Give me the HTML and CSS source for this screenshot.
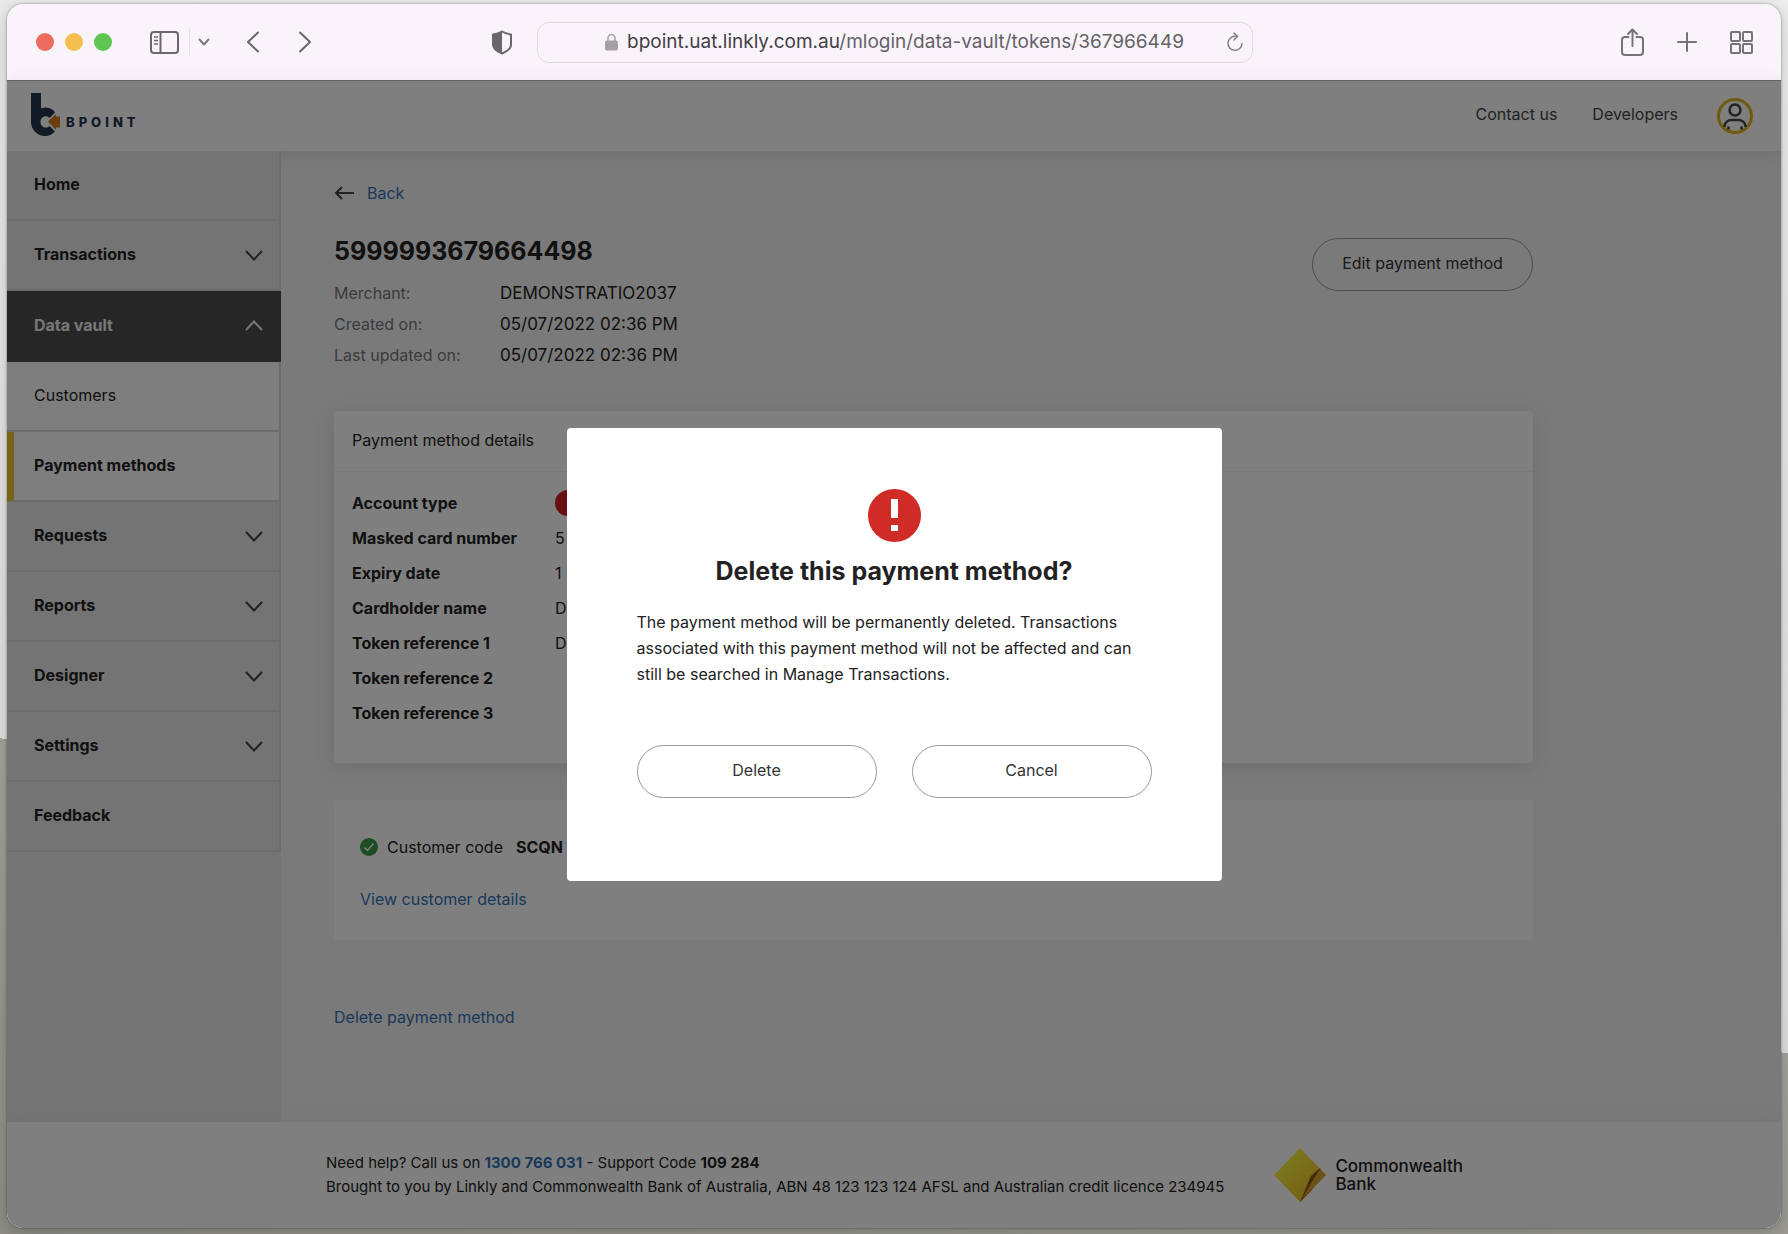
FILE: index.html
```html
<!DOCTYPE html>
<html lang="en">
<head>
    <meta charset="UTF-8">
    <meta name="viewport" content="width=device-width, initial-scale=1.0">
    <title>BPOINT - Payment method</title>
    <link rel="stylesheet" href="styles.css">
</head>
<body>
    <div class="window">

        <!-- Browser toolbar -->
        <div class="toolbar">
            <div class="toolbar-side">
                <span class="dot dot-red"></span>
                <span class="dot dot-yellow"></span>
                <span class="dot dot-green"></span>
                <button type="button" class="tool sidebar-toggle" aria-label="Sidebar">
                    <svg width="29" height="23" viewBox="0 0 29 23" fill="none" stroke="#6b666d" stroke-width="2"><rect x="1" y="1" width="27" height="21" rx="3"/><path d="M10.500 1v21"/><path d="M4 6h4M4 9.500h4M4 13h4" stroke-width="1.500"/></svg>
                </button>
                <span class="tool-divider"></span>
                <button type="button" class="tool" aria-label="Tab groups">
                    <svg width="12" height="8" viewBox="0 0 12 8" fill="none" stroke="#7d7880" stroke-width="2" stroke-linecap="round" stroke-linejoin="round"><path d="M1.500 1.500L6 6.500l4.500-5"/></svg>
                </button>
                <button type="button" class="tool nav-back" aria-label="Go back">
                    <svg width="14" height="22" viewBox="0 0 14 22" fill="none" stroke="#6b666d" stroke-width="2" stroke-linecap="round" stroke-linejoin="round"><path d="M12 1.500L2 11l10 9.500"/></svg>
                </button>
                <button type="button" class="tool nav-forward" aria-label="Go forward">
                    <svg width="14" height="22" viewBox="0 0 14 22" fill="none" stroke="#6b666d" stroke-width="2" stroke-linecap="round" stroke-linejoin="round"><path d="M2 1.500L12 11 2 20.500"/></svg>
                </button>
                <button type="button" class="tool shield" aria-label="Privacy report">
                    <svg width="22" height="25" viewBox="0 0 22 25"><path d="M11 1.500c3 1.800 5.500 2.500 9 3v10c0 4-4 7-9 9-5-2-9-5-9-9v-10c3.500-.5 6-1.200 9-3z" fill="none" stroke="#6b666d" stroke-width="2"/><path d="M11 1.500v22c-5-2-9-5-9-9v-10c3.500-.5 6-1.200 9-3z" fill="#6b666d"/></svg>
                </button>
            </div>
            <div class="address">
                <svg width="13" height="18" viewBox="0 0 13 18"><path d="M3 8V5a3.500 3.500 0 0 1 7 0v3" fill="none" stroke="#a4a0a6" stroke-width="1.500"/><rect y="7.500" width="13" height="10" rx="2" fill="#a4a0a6"/></svg>
                <span class="address-url">bpoint.uat.linkly.com.au<span class="address-path">/mlogin/data-vault/tokens/367966449</span></span>
                <button type="button" class="tool reload" aria-label="Reload">
                    <svg width="16" height="20" viewBox="0 0 16 20" fill="none" stroke="#858088" stroke-width="1.500" stroke-linecap="round" stroke-linejoin="round"><path d="M9.500 4.500a7 7 0 1 0 5.500 7"/><path d="M7 1l3.500 3.500L7 8"/></svg>
                </button>
            </div>
            <div class="toolbar-side toolbar-right">
                <button type="button" class="tool" aria-label="Share">
                    <svg width="23" height="28" viewBox="0 0 23 28" fill="none" stroke="#777279" stroke-width="2" stroke-linecap="round" stroke-linejoin="round"><path d="M7.500 9H4a3 3 0 0 0-3 3v12a3 3 0 0 0 3 3h15a3 3 0 0 0 3-3V12a3 3 0 0 0-3-3h-3.500"/><path d="M11.500 18V1.500M7 6l4.500-4.500L16 6"/></svg>
                </button>
                <button type="button" class="tool" aria-label="New tab">
                    <svg width="20" height="20" viewBox="0 0 20 20" stroke="#777279" stroke-width="2" stroke-linecap="round"><path d="M10 1v18M1 10h18"/></svg>
                </button>
                <button type="button" class="tool" aria-label="Tab overview">
                    <svg width="23" height="23" viewBox="0 0 23 23" fill="none" stroke="#777279" stroke-width="2"><rect x="1" y="1" width="9" height="9" rx="1"/><rect x="13" y="1" width="9" height="9" rx="1"/><rect x="1" y="13" width="9" height="9" rx="1"/><rect x="13" y="13" width="9" height="9" rx="1"/></svg>
                </button>
            </div>
        </div>

        <div class="page">
            <!-- Site header -->
            <header class="header">
                <a href="#" class="logo" aria-label="BPOINT">
                    <svg width="30" height="43" viewBox="0 0 30 43"><path d="M0 0h10v15.500c7-2.500 11.500.5 14 4L18.500 25c-3.500-3.500-9-1-9 4s5.500 7.500 9 4l5.500 5.500C20 43 15.500 43 13 43 5 42 0 36 0 29z" fill="#24344d"/><path d="M17 28.500l8-7.500v2.500h4v11h-4V37z" fill="#d97b1f"/></svg>
                    <span class="logo-text">BPOINT</span>
                </a>
                <nav class="header-links">
                    <a href="#">Contact us</a>
                    <a href="#">Developers</a>
                    <button type="button" class="avatar" aria-label="Account">
                        <svg width="36" height="36" viewBox="0 0 36 36" fill="none"><circle cx="18" cy="18" r="16.500" stroke="#e0b51c" stroke-width="3"/><g stroke="#444" stroke-width="2.500"><circle cx="18" cy="12" r="5.500"/><path d="M7.500 29v-1a7 7 0 0 1 7-6h7a7 7 0 0 1 7 6v1"/><path d="M11.500 28.500v3M24.500 28.500v3"/></g></svg>
                    </button>
                </nav>
            </header>

            <div class="columns">
                <!-- Side navigation -->
                <nav class="sidebar">
                    <a href="#" class="nav-item">Home</a>
                    <a href="#" class="nav-item">Transactions <svg class="chevron" viewBox="0 0 18 11"><path d="M1 1l8 8.500L17 1"/></svg></a>
                    <a href="#" class="nav-item nav-open">Data vault <svg class="chevron" viewBox="0 0 18 11"><path d="M1 10l8-8.500L17 10"/></svg></a>
                    <a href="#" class="nav-item nav-sub">Customers</a>
                    <a href="#" class="nav-item nav-sub nav-current">Payment methods</a>
                    <a href="#" class="nav-item">Requests <svg class="chevron" viewBox="0 0 18 11"><path d="M1 1l8 8.500L17 1"/></svg></a>
                    <a href="#" class="nav-item">Reports <svg class="chevron" viewBox="0 0 18 11"><path d="M1 1l8 8.500L17 1"/></svg></a>
                    <a href="#" class="nav-item">Designer <svg class="chevron" viewBox="0 0 18 11"><path d="M1 1l8 8.500L17 1"/></svg></a>
                    <a href="#" class="nav-item">Settings <svg class="chevron" viewBox="0 0 18 11"><path d="M1 1l8 8.500L17 1"/></svg></a>
                    <a href="#" class="nav-item">Feedback</a>
                </nav>

                <main class="main">
                    <div class="content">
                        <a href="#" class="back">
                            <svg width="20" height="14" viewBox="0 0 20 14" fill="none" stroke="#444" stroke-width="2"><path d="M20 7H2M8 1L2 7l6 6"/></svg>
                            Back
                        </a>

                        <div class="title-row">
                            <div>
                                <h1>5999993679664498</h1>
                                <dl class="summary">
                                    <dt>Merchant:</dt><dd>DEMONSTRATIO2037</dd>
                                    <dt>Created on:</dt><dd>05/07/2022 02:36 PM</dd>
                                    <dt>Last updated on:</dt><dd>05/07/2022 02:36 PM</dd>
                                </dl>
                            </div>
                            <button type="button" class="btn btn-edit">Edit payment method</button>
                        </div>

                        <!-- Payment method details -->
                        <section class="card">
                            <h2>Payment method details</h2>
                            <table class="details">
                                <tr><th scope="row">Account type</th><td><svg class="card-brand" width="40" height="26" viewBox="0 0 40 26"><circle cx="13" cy="13" r="13" fill="#d21f24"/><circle cx="27" cy="13" r="13" fill="#f0991c"/></svg></td></tr>
                                <tr><th scope="row">Masked card number</th><td>5</td></tr>
                                <tr><th scope="row">Expiry date</th><td>1</td></tr>
                                <tr><th scope="row">Cardholder name</th><td>D</td></tr>
                                <tr><th scope="row">Token reference 1</th><td>D</td></tr>
                                <tr><th scope="row">Token reference 2</th><td></td></tr>
                                <tr><th scope="row">Token reference 3</th><td></td></tr>
                            </table>
                        </section>

                        <!-- Customer -->
                        <section class="customer">
                            <p class="customer-code">
                                <svg width="18" height="18" viewBox="0 0 18 18"><circle cx="9" cy="9" r="9" fill="#3a9a40"/><path d="M4.500 9.500l3 3 6-7" fill="none" stroke="#fff" stroke-width="1.500"/></svg>
                                <span>Customer code</span>
                                <strong>SCQN</strong>
                            </p>
                            <a href="#">View customer details</a>
                        </section>

                        <a href="#" class="delete-link">Delete payment method</a>
                    </div>
                </main>
            </div>

            <footer class="footer">
                <p>
                    Need help? Call us on <a href="#">1300 766 031</a> - Support Code <strong>109 284</strong><br>
                    Brought to you by Linkly and Commonwealth Bank of Australia, ABN 48 123 123 124 AFSL and Australian credit licence 234945
                </p>
                <div class="bank">
                    <svg width="52" height="54" viewBox="0 0 52 54">
                        <defs>
                            <linearGradient id="gold" x1="0" y1="0" x2="1" y2="1"><stop offset="0" stop-color="#ffff30"/><stop offset="0.300" stop-color="#f5e93a"/><stop offset="1" stop-color="#e8b020"/></linearGradient>
                            <linearGradient id="fold" x1="0" y1="0" x2="1" y2="1"><stop offset="0" stop-color="#6a3c08"/><stop offset="0.500" stop-color="#8f5410"/><stop offset="1" stop-color="#eebd30"/></linearGradient>
                        </defs>
                        <path d="M26 0l26 27-26 27L0 27z" fill="url(#gold)"/>
                        <path d="M46 20l-9 8-11 26 12-12 9-17z" fill="url(#fold)"/>
                        <path d="M46 21l6 6-24 24 11-19z" fill="#dca32c"/>
                    </svg>
                    <span>Commonwealth<br>Bank</span>
                </div>
            </footer>

            <!-- Delete confirmation -->
            <div class="overlay">
                <div class="modal" role="dialog" aria-modal="true" aria-labelledby="modal-title">
                    <svg class="modal-icon" width="53" height="53" viewBox="0 0 53 53"><circle cx="26.500" cy="26.500" r="26.500" fill="#cf2b27"/><path d="M23 10h7v19h-7zM23 36h7v6h-7z" fill="#fff"/></svg>
                    <h2 id="modal-title">Delete this payment method?</h2>
                    <p>The payment method will be permanently deleted. Transactions associated with this payment method will not be affected and can still be searched in Manage Transactions.</p>
                    <div class="modal-buttons">
                        <button type="button" class="btn">Delete</button>
                        <button type="button" class="btn">Cancel</button>
                    </div>
                </div>
            </div>
        </div>
    </div>
</body>
</html>
```
FILE: styles.css
```css
* {
    box-sizing: border-box;
}

body {
    margin: 0;
    padding: 4px 7px 6px;
    min-height: 100vh;
    display: flex;
    background: linear-gradient(190deg, #eeeeee 0, #e0e0e0 68%, #a3a39b 68%, #8c8c85 100%);
    color: #222;
    font-family: Inter, "Liberation Sans", sans-serif;
    font-size: 16px;
    line-height: 26px;
}

h1, h2, p, dl, dd {
    margin: 0;
}

a {
    color: #3273b4;
    text-decoration: none;
}

button {
    font: inherit;
    color: inherit;
    cursor: pointer;
}

svg {
    display: block;
    flex: none;
}

.window {
    flex: 1;
    display: flex;
    flex-direction: column;
    border-radius: 16px;
    overflow: hidden;
    box-shadow: 0 0 2px rgba(0, 0, 0, 0.5), 0 4px 16px rgba(0, 0, 0, 0.2);
}

/* Browser toolbar */
.toolbar {
    display: flex;
    align-items: center;
    height: 77px;
    padding: 0 28px 0 29px;
    background: #f8f4fa;
    border-bottom: 1px solid #666;
}

.toolbar-side {
    flex: 1;
    display: flex;
    align-items: center;
}

.toolbar-right {
    justify-content: flex-end;
    gap: 33px;
}

.tool {
    padding: 0;
    border: 0;
    background: none;
}

.dot {
    width: 18px;
    height: 18px;
    margin-right: 11px;
    border-radius: 50%;
}

.dot-red { background: #ec6a5e; }
.dot-yellow { background: #f4bf4f; }
.dot-green { background: #61c554; }

.sidebar-toggle {
    margin-left: 27px;
}

.tool-divider {
    width: 1px;
    height: 26px;
    margin: 0 8px 0 10px;
    background: #e6e1e8;
}

.nav-back {
    margin-left: 36px;
}

.nav-forward {
    margin-left: 38px;
}

.shield {
    margin-left: auto;
    margin-right: 24px;
}

.address {
    display: flex;
    align-items: center;
    gap: 9px;
    flex: none;
    width: 716px;
    max-width: 50%;
    height: 41px;
    padding: 0 9px 0 34px;
    border: 1px solid #e0dbe1;
    border-radius: 12px;
}

.address-url {
    color: #444046;
    font-size: 19px;
}

.address > svg {
    margin-left: auto;
}

.address-path {
    color: #666168;
}

.reload {
    margin-left: auto;
}

/* Page */
.page {
    position: relative;
    flex: 1;
    display: flex;
    flex-direction: column;
    background: #f4f4f4;
}

.header {
    display: flex;
    align-items: center;
    justify-content: space-between;
    height: 70px;
    padding: 0 28px 0 24px;
    background: #fff;
    box-shadow: 0 2px 16px rgba(0, 0, 0, 0.1);
}

.logo {
    display: flex;
    align-items: flex-end;
    gap: 5px;
    padding-bottom: 4px;
}

.logo-text {
    color: #24344d;
    font-size: 13px;
    font-weight: 800;
    line-height: 28px;
    letter-spacing: 4px;
}

.header-links {
    display: flex;
    align-items: center;
    gap: 35px;
}

.header-links a {
    padding-bottom: 4px;
    color: #444;
}

.avatar {
    margin-left: 4px;
    padding: 0;
    border: 0;
    background: none;
}

.columns {
    flex: 1;
    display: flex;
}

/* Side navigation */
.sidebar {
    width: 274px;
    background: #e8e8e8;
}

.nav-item {
    display: flex;
    align-items: center;
    justify-content: space-between;
    height: 70px;
    padding: 0 16px 2px 27px;
    border-right: 2px solid #d8d8d8;
    border-bottom: 2px solid #d8d8d8;
    color: #222;
    font-weight: 700;
}

.nav-open {
    height: 71px;
    border-color: #4c4c4c;
    background: #4c4c4c;
    color: #eee;
}

.nav-sub {
    background: #fcfcfc;
    font-weight: 400;
}

.nav-current {
    padding-left: 20px;
    border-left: 7px solid #f2c72e;
    font-weight: 700;
}

.chevron {
    width: 18px;
    height: 11px;
    margin-top: 2px;
    fill: none;
    stroke: #444;
    stroke-width: 2;
}

.nav-open .chevron {
    stroke: #eee;
}

/* Main content */
.main {
    flex: 1;
    padding: 29px 53px;
}

.content {
    max-width: 1199px;
}

.back {
    display: flex;
    align-items: center;
    gap: 13px;
}

.title-row {
    display: flex;
    justify-content: space-between;
    align-items: flex-start;
    padding-top: 32px;
}

h1 {
    font-size: 25px;
    line-height: 26px;
}

.summary {
    display: grid;
    grid-template-columns: 166px auto;
    margin-top: 14px;
    line-height: 31px;
}

.summary dt {
    color: #777;
}

.summary dd {
    font-size: 17px;
}

.btn {
    height: 53px;
    padding: 0 25px 4px;
    border: 1px solid #999;
    border-radius: 27px;
    background: none;
    color: #333;
}

.btn-edit {
    width: 221px;
}

.card {
    margin-top: 40px;
    padding-bottom: 33px;
    border-radius: 4px;
    background: #fff;
    box-shadow: 0 4px 20px rgba(0, 0, 0, 0.1);
}

.card h2 {
    padding: 16px 18px 18px;
    border-bottom: 1px solid #f2f2f2;
    font-size: 16px;
    font-weight: 400;
}

.details {
    margin-top: 13px;
    border-collapse: collapse;
}

.details tr {
    height: 35px;
}

.details th {
    width: 221px;
    padding: 0 0 0 18px;
    text-align: left;
    white-space: nowrap;
}

.details td {
    padding: 0;
}

.customer {
    margin-top: 37px;
    padding: 34px 26px 28px;
    border-radius: 4px;
    background: #fff;
}

.customer-code {
    display: flex;
    align-items: center;
    gap: 9px;
    margin-bottom: 26px;
}

.customer-code strong {
    margin-left: 4px;
}

.delete-link {
    display: inline-block;
    margin-top: 64px;
}

/* Footer */
.footer {
    display: flex;
    align-items: center;
    gap: 50px;
    height: 106px;
    padding-left: 319px;
    background: #fff;
    font-size: 15px;
    line-height: 24px;
    box-shadow: 0 -2px 16px rgba(0, 0, 0, 0.04);
}

.footer a {
    font-weight: 700;
}

.bank {
    display: flex;
    align-items: center;
    gap: 9px;
    font-size: 17px;
    font-weight: 500;
    line-height: 18px;
}

/* Delete confirmation */
.overlay {
    position: absolute;
    inset: 0;
    display: flex;
    align-items: center;
    justify-content: center;
    background: rgba(0, 0, 0, 0.5);
}

.modal {
    width: 655px;
    padding: 61px 70px 83px;
    border-radius: 4px;
    background: #fff;
}

.modal-icon {
    margin: 0 auto;
}

.modal h2 {
    margin: 16px 0 25px;
    font-size: 25px;
    line-height: 26px;
    text-align: center;
}

.modal-buttons {
    display: flex;
    gap: 35px;
    margin-top: 58px;
}

.modal-buttons .btn {
    flex: 1;
}
```
